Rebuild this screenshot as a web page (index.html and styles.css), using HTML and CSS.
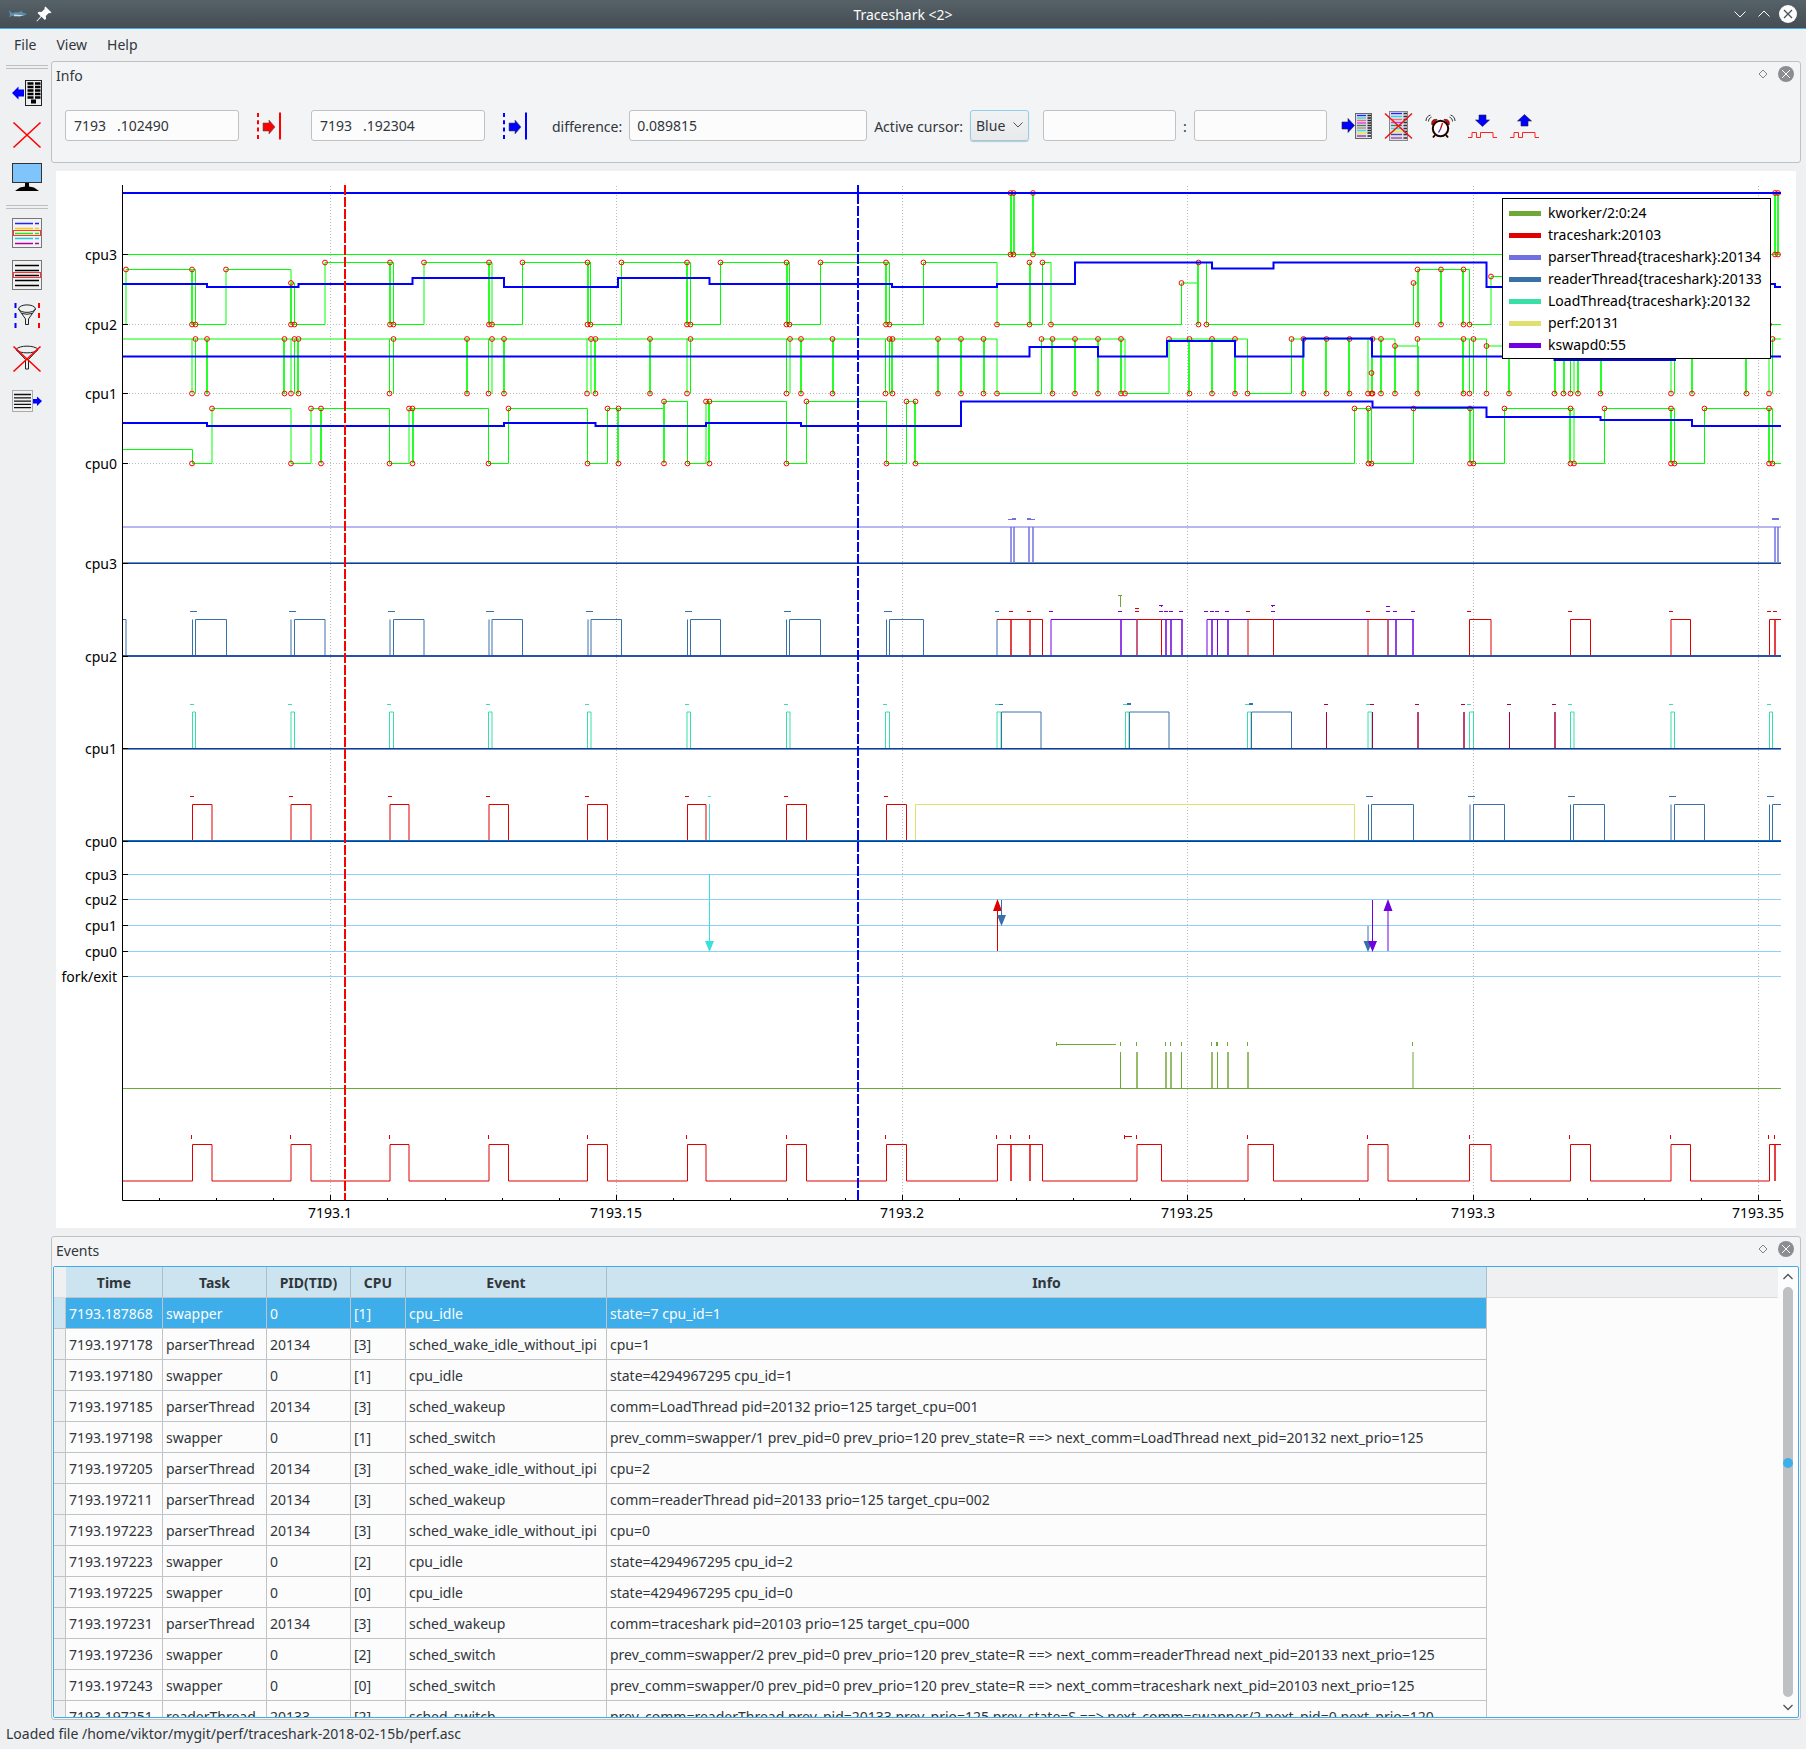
FILE: index.html
```html
<!DOCTYPE html>
<html lang="en">
<head>
<meta charset="utf-8">
<title>Traceshark &lt;2&gt;</title>
<link rel="stylesheet" href="styles.css">
</head>
<body>
<header class="titlebar">
  <div class="titlebar-side">
    <svg width="18" height="18" viewBox="0 0 18 18"><path d="M0 5l3 3c3-.8 5-.8 8-.8l1-2 1.500 2.300 4.500 1.500-3 1.500-3 .3-2 1.200-1-1.200-6 .2-3 1 1-2z" fill="#5b8fae"/><path d="M5 9.500l10 .8-4 1H5z" fill="#d5dde2"/></svg>
    <svg width="18" height="18" viewBox="0 0 18 18"><path d="M10.500 1.500l6 6-1.500.8-1.200-.3-3 3 .3 2.700-1.300 1.300-3.300-3.200L2 16.500l-.5-.5 4.200-4.700L2.500 8l1.300-1.300 2.700.3 3.200-3-.3-1.200z" fill="#fcfcfc"/></svg>
  </div>
  <h1 class="titlebar-text">Traceshark &lt;2&gt;</h1>
  <div class="titlebar-side titlebar-buttons">
    <button class="win-btn" aria-label="Minimize"><svg width="18" height="18" viewBox="0 0 18 18"><path d="M3.500 6.500L9 12l5.500-5.500" fill="none" stroke="#fcfcfc"/></svg></button>
    <button class="win-btn" aria-label="Maximize"><svg width="18" height="18" viewBox="0 0 18 18"><path d="M3.500 11.500L9 6l5.500 5.500" fill="none" stroke="#fcfcfc"/></svg></button>
    <button class="win-btn" aria-label="Close"><svg width="18" height="18" viewBox="0 0 18 18"><circle cx="9" cy="9" r="9" fill="#fcfcfc"/><path d="M5 5l8 8M13 5l-8 8" stroke="#475057" stroke-width="1.200"/></svg></button>
  </div>
</header>

<nav class="menubar">
  <button class="menu-item">File</button>
  <button class="menu-item">View</button>
  <button class="menu-item">Help</button>
</nav>

<div class="workspace">
  <aside class="toolbar">
    <div class="grip"></div>
    <div class="toolbar-group">
      <button class="icon-btn" aria-label="Open file"><svg class="icon" viewBox="0 0 32 32"><rect x="14.500" y="3.500" width="16" height="25" fill="#eee" stroke="#222"/><path d="M16.500 6.500h6M24 6.500h5.500M16.500 10h6M24 10h5.500M16.500 13.500h6M24 13.500h5.500M16.500 17h6M24 17h5.500M16.500 20.500h6M24 20.500h5.500" stroke="#000" stroke-width="2.600"/><path d="M20 22.500h5v4h-5z"/><path d="M1 16l6.500-6.500v3H13v7H7.500v3z" fill="#00f"/></svg></button>
      <button class="icon-btn" aria-label="Close file"><svg class="icon" viewBox="0 0 32 32"><path d="M2.500 3.500l27 25M29.500 3.500l-27 25" stroke="#f00" stroke-width="1.600"/></svg></button>
      <button class="icon-btn" aria-label="Full screen"><svg class="icon" viewBox="0 0 32 32"><rect x="1.500" y="2.500" width="29" height="19" fill="#80c4fc" stroke="#333"/><path d="M14 22h4v3.500l5 1 5 3.500H4l5-3.500 5-1z"/></svg></button>
    </div>
    <div class="grip"></div>
    <div class="toolbar-group">
      <button class="icon-btn" aria-label="Choose task"><svg class="icon" viewBox="0 0 32 32"><rect x="1.500" y="1.500" width="29" height="29" fill="#f2f2f2" stroke="#777"/><g stroke-width="1.600"><path d="M4 6.500h18M24 6.500h4" stroke="#22f"/><path d="M4 11.500h18M24 11.500h4" stroke="#fc0"/><path d="M4 16.500h18M24 16.500h4" stroke="#1e1"/><path d="M4 21.500h18M24 21.500h4" stroke="#2cd"/><path d="M4 26.500h18M24 26.500h4" stroke="#a0a"/></g><rect x="2.500" y="13.500" width="27" height="5" fill="none" stroke="#f33"/></svg></button>
      <button class="icon-btn" aria-label="Choose event"><svg class="icon" viewBox="0 0 32 32"><rect x="1.500" y="1.500" width="29" height="29" fill="#f2f2f2" stroke="#777"/><path d="M4 6.500h24M4 11.500h24M4 16.500h24M4 21.500h24M4 26.500h24" stroke="#000" stroke-width="1.600"/><rect x="2.500" y="13.500" width="27" height="5" fill="none" stroke="#f33"/></svg></button>
      <button class="icon-btn" aria-label="Filter on time"><svg class="icon" viewBox="0 0 32 32"><path d="M4.500 2v25" stroke="#00f" stroke-width="2" stroke-dasharray="5 5"/><path d="M28 2v25" stroke="#f00" stroke-width="2" stroke-dasharray="5 5"/><path d="M7.500 8C8 2.500 24 2.500 24.500 8l-7 10v5.500h-3V18zM7.500 8c2 4.500 15 4.500 17 0M11 12.500q5 1.500 10 0" fill="none" stroke="#222"/></svg></button>
      <button class="icon-btn" aria-label="Reset filters"><svg class="icon" viewBox="0 0 32 32"><path d="M5 6.500C8 2 24 2 27 6.500l-9.500 10V26h-3v-9.500zM5 6.500c3 4.500 19 4.500 22 0" fill="none" stroke="#222"/><path d="M2.500 3.500l27 25M29.500 3.500l-27 25" stroke="#f00" stroke-width="1.600"/></svg></button>
      <button class="icon-btn" aria-label="Export events"><svg class="icon" viewBox="0 0 32 32"><rect x="1.500" y="5.500" width="20" height="21" fill="#f2f2f2" stroke="#aaa"/><path d="M3 9.500h17M3 12.800h17M3 16.100h17M3 19.400h17M3 22.700h17" stroke="#111" stroke-width="1.300"/><path d="M31 16l-5-4.500V14h-4v4.500h4V21z" fill="#00f"/></svg></button>
    </div>
  </aside>

  <main class="docks">
    <section class="dock">
      <div class="dock-head">
        <h2 class="dock-title">Info</h2>
        <button class="dock-btn" aria-label="Float"><svg width="16" height="16" viewBox="0 0 16 16"><path d="M8 4l4 4-4 4-4-4z" fill="none" stroke="#7f8489"/></svg></button>
        <button class="dock-btn" aria-label="Close"><svg width="16" height="16" viewBox="0 0 16 16"><circle cx="8" cy="8" r="8" fill="#8b8e91"/><path d="M4 4l8 8M12 4l-8 8" stroke="#fcfcfc"/></svg></button>
      </div>
      <div class="info-row">
        <div class="cursor-group">
          <input class="field field-time" type="text" value="7193   .102490" aria-label="Red cursor time">
          <button class="icon-btn" aria-label="Move red cursor"><svg class="icon" viewBox="0 0 32 32"><path d="M5 3v26" stroke="#f00" stroke-width="2" stroke-dasharray="4 3.300"/><path d="M27 2.500v27" stroke="#f00" stroke-width="2"/><path d="M10 13h6v-3l6 7-6 7v-3h-6z" fill="#f00" stroke="#555" stroke-width=".6"/></svg></button>
        </div>
        <div class="cursor-group">
          <input class="field field-time" type="text" value="7193   .192304" aria-label="Blue cursor time">
          <button class="icon-btn" aria-label="Move blue cursor"><svg class="icon" viewBox="0 0 32 32"><path d="M5 3v26" stroke="#00f" stroke-width="2" stroke-dasharray="4 3.300"/><path d="M27 2.500v27" stroke="#00f" stroke-width="2"/><path d="M10 13h6v-3l6 7-6 7v-3h-6z" fill="#00f" stroke="#555" stroke-width=".6"/></svg></button>
        </div>
        <div class="labelled">
          <label for="difference">difference:</label>
          <input id="difference" class="field field-difference" type="text" value="0.089815">
          <label for="active-cursor">Active cursor:</label>
          <span class="combo">
            <select id="active-cursor"><option>Blue</option><option>Red</option></select>
            <svg class="combo-arrow" width="12" height="12" viewBox="0 0 12 12"><path d="M1.500 3.500L6 8l4.500-4.500" fill="none" stroke="#4d5257"/></svg>
          </span>
        </div>
        <div class="search-group">
          <input class="field field-search" type="text" aria-label="PID">
          <span>:</span>
          <input class="field field-search" type="text" aria-label="Task name">
        </div>
        <div class="action-group">
          <button class="icon-btn" aria-label="Show in event list"><svg class="icon" viewBox="0 0 32 32"><path d="M2 12h6V8.500l6.500 7-6.500 7V19H2z" fill="#00f" stroke="#223" stroke-width=".6"/><rect x="15.500" y="3.500" width="16" height="25" fill="#dde" stroke="#666"/><g stroke-width="1.300"><path d="M17 5.500h9" stroke="#22f"/><path d="M17 8h9" stroke="#2dd"/><path d="M17 10.500h9" stroke="#f66"/><path d="M17 13h9" stroke="#d3d"/><path d="M17 15.500h9" stroke="#384"/><path d="M17 18h9" stroke="#b86"/><path d="M17 20.500h9" stroke="#3dd"/><path d="M17 23h9" stroke="#ee2"/><path d="M17 26h9" stroke="#838"/><path d="M27.500 5.500H31M27.500 8H31M27.500 10.500H31M27.500 13H31M27.500 15.500H31M27.500 18H31M27.500 20.500H31M27.500 23H31M27.500 26H31" stroke="#222"/></g></svg></button>
          <button class="icon-btn" aria-label="Remove from event list"><svg class="icon" viewBox="0 0 32 32"><rect x="7.500" y="1.500" width="18" height="29" fill="#dde" stroke="#888"/><g stroke-width="1.300"><path d="M9 3.500h11" stroke="#22f"/><path d="M9 6.500h11" stroke="#2dd"/><path d="M9 9.500h11" stroke="#f66"/><path d="M9 12.500h11" stroke="#d3d"/><path d="M9 15.500h11" stroke="#384"/><path d="M9 18.500h11" stroke="#3dd"/><path d="M9 21.500h11" stroke="#ee2"/><path d="M9 24.500h11" stroke="#44a"/><path d="M9 28h11" stroke="#949"/><path d="M21.500 3.500H25M21.500 6.500H25M21.500 9.500H25M21.500 12.500H25M21.500 15.500H25M21.500 18.500H25M21.500 21.500H25M21.500 24.500H25M21.500 28H25" stroke="#333"/></g><path d="M3 3.500l27 25M30 3.500l-27 25" stroke="#e11" stroke-width="1.500"/></svg></button>
          <button class="icon-btn" aria-label="Alarm"><svg class="icon" viewBox="0 0 32 32"><path d="M8 15c-1-4 1-6 5-5.500zM25 15c1-4-1-6-5-5.500z" fill="#e00" stroke="#300" stroke-width=".7"/><path d="M11 25l-2 2.500M22 25l2 2.500" stroke="#200" stroke-width="2"/><circle cx="16.500" cy="18.500" r="7.700" fill="#fff" stroke="#200" stroke-width="2"/><path d="M16.500 19l2-6" stroke="#d00" stroke-width="1.300"/><path d="M16.500 19l-2 3.500" stroke="#33c" stroke-width="1.300"/><path d="M2 11c0-3 1.500-5 4.500-6M4.500 11.500c0-2 1-3.500 3-4.500M31 11c0-3-1.500-5-4.500-6M28.500 11.500c0-2-1-3.500-3-4.500" fill="none" stroke="#333"/></svg></button>
          <button class="icon-btn" aria-label="Next event"><svg class="icon" viewBox="0 0 32 32"><path d="M13 5h7v5h3.500l-7 6.500-7-6.500H13z" fill="#00f" stroke="#223" stroke-width=".6"/><path d="M2 27.500h4v-5h4.500v5h4v-5H27v5h4" fill="none" stroke="#f22"/></svg></button>
          <button class="icon-btn" aria-label="Previous event"><svg class="icon" viewBox="0 0 32 32"><path d="M13 16h7v-5h3.500l-7-6.500-7 6.500H13z" fill="#00f" stroke="#223" stroke-width=".6"/><path d="M2 27.500h4v-5h4.500v5h4v-5H27v5h4" fill="none" stroke="#f22"/></svg></button>
        </div>
      </div>
    </section>

    <section class="plot">
      <svg class="plot-canvas" viewBox="56 171 1740 1057" role="img" aria-label="CPU scheduling trace">
        <defs>
          <marker id="dot" markerWidth="7" markerHeight="7" refX="3.500" refY="3.500" markerUnits="userSpaceOnUse"><circle cx="3.500" cy="3.500" r="2.400" fill="none" stroke="#f00"/></marker>
        </defs>
        <!-- grid -->
        <path class="grid" d="M330.500 186V1200M616.500 186V1200M902.500 186V1200M1187.500 186V1200M1473.500 186V1200M1758.500 186V1200M123 324.500H1781M123 393.500H1781M123 463.500H1781"/>

        <!-- idle states -->
        <g class="idle">
          <path d="M123 254.500H1781"/>
          <path d="M126 324.500V269.500H192.500V324.500H195.500V269.500H192.500M195.500 324.500H226V269.500H291V324.500H294.500V283H291M294.500 324.500H325V262.500H390V324.500M390 262.500H393.500V324.500H424V262.500H489V324.500M489 262.500H492V324.500H522.500V262.500H587.500V324.500M587.500 262.500H590.500V324.500H621.500V262.500H687V324.500M687 262.500H690.500V324.500H720.500V262.500H786.500V324.500M786.500 262.500H789.500V324.500H820.500V262.500H886V324.500M886 262.500H889.500V324.500H923.500V262.500H997V324.500H1042.500V262.500H1051V324.500H1181.500V283H1198.500M1198.500 262.500H1206.500V324.500H1413.500V283H1417.500M1417.500 324.500V269.500H1469.500V324.500H1491V276.500H1520M1765 324.500H1781"/>
          <path d="M123 339H997V393.500H1041.500V339H1125V393.500H1169V339H1247.500V393.500H1291.500V339H1395V346H1417.500V339H1486.500V346H1520M192 339V393.500M195.500 339V393.500M291 339V393.500M294.500 339V393.500M389.500 339V393.500M393.500 339V393.500M488.500 339V393.500M492 339V393.500M587 339V393.500M591 339V393.500M687 339V393.500M690.500 339V393.500M786.500 339V393.500M790 339V393.500M885.500 339V393.500M889.500 339V393.500M1368 339V393.500M1469.500 339V393.500M1473.500 339V393.500M1486.500 346V393.500M1570.500 346V393.500M1574 346V393.500M1671 346V393.500M1674.500 346V393.500M1769 346V393.500M1781 339H1772.500V393.500"/>
          <path d="M123 449.500H192.500V463.500H212V408.500H291V463.500H311V408.500H389.500V463.500H409V408.500H488.500V463.500H508.500V408.500H587.500V463.500H607.500V408.500H664M664 401.500H687.500V463.500H706V401.500H786.500V463.500H806.500V401.500H886.500V463.500H906.500V401.500H915.500V463.500H1354.500V408.500H1371.500V463.500H1413.500V408.500H1473.500V463.500H1504.500V408.500H1574V463.500H1604.500V408.500H1674.500V463.500H1704.500V408.500H1772.500V463.500H1781"/>
        </g>
        <g class="spikes">
          <path d="M1011 193V254M1014 193V254M1033 193V254M1775 193V254M1778 193V254"/>
          <path d="M192 269V325M291 283V325M390 262V325M489 262V325M588 262V325M687 262V325M787 262V325M886 262V325M1030 262V325M1198 262V325M1418 269V325M1441 269V325M1463 269V325"/>
          <path d="M207 339V394M284 339V394M298 339V394M467 339V394M504 339V394M595 339V394M650 339V394M801 339V394M833 339V394M892 339V394M938 339V394M961 339V394M984 339V394M1052 339V394M1075 339V394M1098 339V394M1121 339V394M1189 339V394M1212 339V394M1235 339V394M1303 339V394M1326 339V394M1349 339V394M1372 339V394M1381 339V394M1395 346V394M1418 346V394M1463 339V394M1509 346V394M1555 346V394M1564 346V394M1578 346V394M1601 346V394M1692 346V394M1746 346V394"/>
          <path d="M321 408V463M413 408V463M618 408V463M664 401V463M709 401V463M915 401V463M1368 408V463M1470 408V463M1570 408V463M1671 408V463M1769 408V463"/>
        </g>
        <polyline class="dots" points="1010.500,193 1013.500,193 1033,193 1775,193 1778,193 1010.500,254.500 1013.500,254.500 1033,254.500 1775,254.500 1778,254.500"/>
        <polyline class="dots" points="126,269.500 192,269.500 192,324.500 195.500,324.500 226,269.500 291,283 291,324.500 294.500,324.500 325,262.500 390,262.500 390,324.500 393.500,324.500 424,262.500 489,262.500 489,324.500 492,324.500 522.500,262.500 587.500,262.500 587.500,324.500 590.500,324.500 621.500,262.500 687,262.500 687,324.500 690.500,324.500 720.500,262.500 786.500,262.500 786.500,324.500 789.500,324.500 820.500,262.500 886,262.500 886,324.500 889.500,324.500 923.500,262.500 997,324.500 1029.500,262.500 1029.500,324.500 1042.500,262.500 1051,324.500 1181.500,283 1198.500,262.500 1198.500,324.500 1206.500,324.500 1413.500,283 1417.500,269.500 1417.500,324.500 1441,269.500 1441,324.500 1463.500,269.500 1463.500,324.500 1469.500,324.500 1491,276.500 1769,324.500"/>
        <polyline class="dots" points="192,393.500 195.500,339 207,339 207,393.500 284.500,339 284.500,393.500 291,393.500 294.500,339 298.500,339 298.500,393.500 389.500,393.500 393.500,339 467,339 467,393.500 488.500,393.500 492,339 504,339 504,393.500 587,393.500 591,339 595.500,339 595.500,393.500 650,339 650,393.500 687,393.500 690.500,339 786.500,393.500 790,339 801,339 801,393.500 832.500,339 832.500,393.500 885.500,393.500 889.500,339 892.500,339 892.500,393.500 938,339 938,393.500 961,339 961,393.500 983.500,339 983.500,393.500 997,393.500 1041.500,339 1052.500,339 1052.500,393.500 1075,339 1075,393.500 1098,339 1098,393.500 1121,339 1121,393.500 1125,393.500 1169,339 1189.500,339 1189.500,393.500 1212,339 1212,393.500 1235,339 1235,393.500 1247.500,393.500 1291.500,339 1303.500,339 1303.500,393.500 1326.500,339 1326.500,393.500 1349.500,339 1349.500,393.500 1368,393.500 1371.500,373 1371.500,393.500 1372.500,393.500 1372.500,339 1381,339 1381,393.500 1395,346 1395,393.500 1417.500,393.500 1417.500,339 1463.500,339 1463.500,393.500 1469.500,393.500 1473.500,339 1486.500,346 1486.500,393.500 1509,393.500 1554.500,393.500 1563.500,393.500 1570.500,393.500 1578,393.500 1600.500,393.500 1671,393.500 1692,393.500 1746.500,393.500 1769,393.500 1772.500,339"/>
        <polyline class="dots" points="192,463.500 212,408.500 291,463.500 311,408.500 321,408.500 321,463.500 389.500,463.500 409,408.500 412.500,408.500 412.500,463.500 488.500,463.500 508.500,408.500 587.500,463.500 607.500,408.500 618.500,408.500 618.500,463.500 664,401.500 664,463.500 687.500,463.500 706,401.500 709.500,401.500 709.500,463.500 786.500,463.500 806.500,401.500 886.500,463.500 906.500,401.500 915.500,401.500 915.500,463.500 1354.500,408.500 1368.500,408.500 1368.500,463.500 1371.500,463.500 1413.500,408.500 1470,408.500 1470,463.500 1473.500,463.500 1504.500,408.500 1570.500,408.500 1570.500,463.500 1574,463.500 1604.500,408.500 1671,408.500 1671,463.500 1674.500,463.500 1704.500,408.500 1769,408.500 1769,463.500 1772.500,463.500"/>

        <!-- frequencies -->
        <g class="freq">
          <path d="M123 193H1781"/>
          <path d="M123 284H207V287H298.500V284H412.500V278H504V287H618V278H709.500V284H892V287H997V284H1075V262.500H1212V268.500H1273.500V262.500H1486.500V287H1600V284H1775V287H1781"/>
          <path d="M123 356.500H1029.500V347H1098V356.500H1167V341H1235V356.500H1303.500V338.500H1372V356.500H1554.500V360H1675V356.500H1781"/>
          <path d="M123 423H207V426H504V423H595.500V426H706V423H801V426H961V401.500H1372.500V407.500H1486.500V417H1600.500V420H1692V426H1781"/>
        </g>

        <!-- scheduling, cpu3 -->
        <path class="parser" d="M123 527H1781M1008 519.500H1016M1012 518.500H1016M1027 519.500H1035M1027 518.500H1031M1772 519.500H1779M1772 518.500H1779"/>
        <path class="parser wide" d="M1011 527V563M1014 527V563M1029 527V563M1033 527V563M1775 527V563M1778 527V563"/>
        <path class="base-shade" d="M123 562.500H1781"/><path class="base-blue" d="M123 563.500H1781"/>

        <!-- scheduling, cpu2 -->
        <path class="reader" d="M123 619.500H126V656M192.500 619.500V656M195.500 656V619.500H226.500V656M291 619.500V656M294.500 656V619.500H325V656M390 619.500V656M393.500 656V619.500H424V656M489 619.500V656M492 656V619.500H522.500V656M588 619.500V656M591 656V619.500H621.500V656M687.500 619.500V656M690.500 656V619.500H720.500V656M786.500 619.500V656M789.500 656V619.500H820.500V656M886.500 619.500V656M889.500 656V619.500H923.500V656M997 619.500V656M190 611.500H197M289 611.500H296M388 611.500H395M486 611.500H494M586 611.500H593M685 611.500H692M784 611.500H791M884 611.500H892M995 611.500H999"/>
        <path class="kswapd" d="M1051 656V619.500H1137M1161.500 619.500H1182M1207 656V619.500H1248M1273.500 619.500H1368M1388 619.500H1413.500M1217.500 619.500V656M1049 611.500H1053M1118 611.500H1122M1159 611.500H1163M1159 605.500H1163M1161.500 605V607M1164 611.500H1168M1169 611.500H1173M1179 611.500H1183M1204 611.500H1208M1210 611.500H1214M1215 611.500H1219M1225 611.500H1229M1271 611.500H1275M1271 605.500H1275M1272.500 605V607M1386 611.500H1390M1386 606.500H1390M1393 611.500H1397M1411 611.500H1415"/>
        <path class="kswapd wide" d="M1121 619V656M1166 619V656M1171 619V656M1182 619V656M1212 619V656M1228 619V656M1396 619V656M1413 619V656"/>
        <path class="shark" d="M997 619.500H1042.500V656M1137 619.500H1161.500V656M1248 656V619.500H1273.500V656M1368 656V619.500H1388M1469.500 656V619.500H1491V656M1570.500 656V619.500H1590.500V656M1671 656V619.500H1690.500V656M1769.500 656V619.500H1781M1009 611.500H1013M1027 611.500H1031M1135 611.500H1139M1135 608.500H1139M1246 611.500H1250M1366 611.500H1370M1467 611.500H1471M1568 611.500H1572M1669 611.500H1673M1767 611.500H1771M1773 611.500H1777"/>
        <path class="shark wide" d="M1011 619V656M1030 619V656M1775 619V656"/>
        <path class="mixed wide" d="M1137 619V656M1388 619V656"/>
        <path class="kworker" d="M1118 595.500H1122M1120.500 595V607"/>
        <path class="base-cpu2 wide" d="M123 656H1781"/>

        <!-- scheduling, cpu1 -->
        <path class="loader" d="M192.500 749V712H195.500V749M291 749V712H294.500V749M389.500 749V712H393.500V749M488.500 749V712H492V749M587.500 749V712H591V749M687 749V712H690.500V749M786.500 749V712H790V749M885.500 749V712H889.500V749M997 749V712H1001V749M1125.500 749V712H1129V749M1247.500 749V712H1251V749M1368 749V712H1372V749M1469.500 749V712H1473.500V749M1570.500 749V712H1574V749M1671 749V712H1674.500V749M1769.500 749V712H1772.500V749M190 704.500H194M288 704.500H292M387 704.500H391M486 704.500H490M585 704.500H589M685 704.500H689M784 704.500H788M883 704.500H887M995 704.500H999M1123 704.500H1127M1245 704.500H1249M1366 704.500H1370M1467 704.500H1471M1568 704.500H1572M1669 704.500H1673M1767 704.500H1771"/>
        <path class="reader" d="M1001.500 749V712H1041V749M1129.500 749V712H1169V749M1251.500 749V712H1291.500V749M999 704.500H1003M1127 704.500H1131M1127 703.500H1131M1249 704.500H1253M1249 703.500H1253"/>
        <path class="maroon" d="M1326.500 712V749M1372.500 712V749M1509.500 712V749M1324 704.500H1328M1370 704.500H1374M1415 704.500H1419M1461 704.500H1465M1507 704.500H1511M1552 704.500H1556"/>
        <path class="maroon wide" d="M1418 712V749M1464 712V749M1555 712V749"/>
        <path class="base-blue" d="M123 748.500H1781"/><path class="base-shade" d="M123 749.500H1781"/>

        <!-- scheduling, cpu0 -->
        <path class="shark" d="M192.500 841V804.500H212V841M291 841V804.500H311V841M390 841V804.500H409V841M489 841V804.500H508.500V841M587.500 841V804.500H607.500V841M687.500 841V804.500H706V841M786.500 841V804.500H806.500V841M886.500 841V804.500H906.500V841M190 796.500H194M289 796.500H293M388 796.500H392M486 796.500H490M585 796.500H589M685 796.500H689M784 796.500H788M884 796.500H888"/>
        <path class="cyan" d="M709.500 804V841M708 796.500H711"/>
        <path class="perf" d="M915.500 841V804.500H1354.500V841"/>
        <path class="reader" d="M1368.500 804.500V841M1371.500 841V804.500H1413.500V841M1470 804.500V841M1473.500 841V804.500H1504.500V841M1570.500 804.500V841M1573.500 841V804.500H1604.500V841M1671 804.500V841M1674.500 841V804.500H1704.500V841M1769.500 804.500V841M1772.500 841V804.500H1781M1366 796.500H1373M1468 796.500H1475M1568 796.500H1575M1669 796.500H1676M1767 796.500H1774"/>
        <path class="base-teal" d="M123 840.500H1781"/><path class="base-blue" d="M123 841.500H1781"/>

        <!-- migrations -->
        <path class="lane" d="M123 874.500H1781M123 899.500H1781M123 925.500H1781M123 951.500H1781M123 976.500H1781"/>
        <path class="cyan" d="M709.500 874V942"/><path fill="#38e0e0" d="M705 941h9l-4.500 11z"/>
        <path class="shark" d="M997.500 951V908"/><path fill="#e00000" d="M993 911h9l-4.500-12z"/>
        <path class="reader" d="M1001.500 900V916M1368 926V942"/><path fill="#3870a8" d="M997 915h9l-4.500 11zM1363.500 941h9l-4.500 11z"/>
        <path class="kswapd" d="M1372.500 900V942M1388 951V908"/><path fill="#7000e0" d="M1368 941h9l-4.500 11zM1383.500 911h9l-4.500-12z"/>

        <!-- single tasks -->
        <path class="kworker" d="M123 1088.500H1781M1120.500 1052V1088M1181.500 1052V1088M1217.500 1052V1088M1413 1052V1088M1056.500 1042V1046M1057 1044.500H1116M1120.500 1042V1046M1136.500 1042V1046M1165.500 1042V1046M1170.500 1042V1046M1181.500 1042V1046M1211.500 1042V1046M1216.500 1042V1046M1217.500 1042V1046M1227.500 1042V1046M1247.500 1042V1046M1412.500 1042V1046"/>
        <path class="kworker wide" d="M1137 1052V1088M1166 1052V1088M1171 1052V1088M1212 1052V1088M1228 1052V1088M1248 1052V1088"/>
        <path class="shark" d="M123 1181H192.500V1144.500H212V1181H291V1144.500H311V1181H390V1144.500H409V1181H489V1144.500H508.500V1181H587.500V1144.500H607.500V1181H687.500V1144.500H706V1181H786.500V1144.500H806.500V1181H886.500V1144.500H906.500V1181H997.500V1144.500H1042.500V1181H1137V1144.500H1161.500V1181H1248V1144.500H1273.500V1181H1368V1144.500H1388V1181H1469.500V1144.500H1491V1181H1570.500V1144.500H1590.500V1181H1671V1144.500H1690.500V1181H1769.500V1144.500H1781M191.500 1135V1139M290.500 1135V1139M389.500 1135V1139M488.500 1135V1139M587.500 1135V1139M686.500 1135V1139M786.500 1135V1139M885.500 1135V1139M996.500 1135V1139M1010.500 1135V1139M1029.500 1135V1139M1124.500 1135V1139M1125 1136.500H1132M1136.500 1135V1139M1247.500 1135V1139M1367.500 1135V1139M1469.500 1135V1139M1569.500 1135V1139M1670.500 1135V1139M1768.500 1135V1139M1774.500 1135V1139"/>
        <path class="shark wide" d="M1011 1144V1181M1030 1144V1181M1775 1144V1181"/>

        <!-- axes -->
        <path class="axis" d="M122.500 185V1200.500H1781M123 254.500h5M123 324.500h5M123 393.500h5M123 463.500h5M123 563.500h5M123 656.500h5M123 748.500h5M123 841.500h5M123 874.500h5M123 899.500h5M123 925.500h5M123 951.500h5M123 976.500h5M330.500 1200v-5M616.500 1200v-5M902.500 1200v-5M1187.500 1200v-5M1473.500 1200v-5M1758.500 1200v-5M159.500 1200v-2M216.500 1200v-2M273.500 1200v-2M387.500 1200v-2M445.500 1200v-2M502.500 1200v-2M559.500 1200v-2M673.500 1200v-2M730.500 1200v-2M787.500 1200v-2M845.500 1200v-2M959.500 1200v-2M1016.500 1200v-2M1073.500 1200v-2M1130.500 1200v-2M1244.500 1200v-2M1301.500 1200v-2M1359.500 1200v-2M1416.500 1200v-2M1530.500 1200v-2M1587.500 1200v-2M1644.500 1200v-2M1701.500 1200v-2"/>
        <g class="y-labels">
          <text x="117" y="260">cpu3</text><text x="117" y="330">cpu2</text><text x="117" y="399">cpu1</text><text x="117" y="469">cpu0</text>
          <text x="117" y="569">cpu3</text><text x="117" y="662">cpu2</text><text x="117" y="754">cpu1</text><text x="117" y="847">cpu0</text>
          <text x="117" y="880">cpu3</text><text x="117" y="905">cpu2</text><text x="117" y="931">cpu1</text><text x="117" y="957">cpu0</text>
          <text x="117" y="982">fork/exit</text>
        </g>
        <g class="x-labels">
          <text x="330" y="1218">7193.1</text><text x="616" y="1218">7193.15</text><text x="902" y="1218">7193.2</text><text x="1187" y="1218">7193.25</text><text x="1473" y="1218">7193.3</text><text x="1758" y="1218">7193.35</text>
        </g>
        <path class="cursor-line" stroke="#f00" d="M345 185V1200"/>
        <path class="cursor-line" stroke="#00f" stroke-dashoffset="3" d="M858 185V1200"/>
      </svg>
      <ul class="legend">
        <li><i class="swatch" style="background:#70a838"></i>kworker/2:0:24</li>
        <li><i class="swatch" style="background:#e00000"></i>traceshark:20103</li>
        <li><i class="swatch" style="background:#7070e0"></i>parserThread{traceshark}:20134</li>
        <li><i class="swatch" style="background:#3870a8"></i>readerThread{traceshark}:20133</li>
        <li><i class="swatch" style="background:#38e0a8"></i>LoadThread{traceshark}:20132</li>
        <li><i class="swatch" style="background:#e0e070"></i>perf:20131</li>
        <li><i class="swatch" style="background:#7000e0"></i>kswapd0:55</li>
      </ul>
    </section>

    <section class="dock dock-events">
      <div class="dock-head">
        <h2 class="dock-title">Events</h2>
        <button class="dock-btn" aria-label="Float"><svg width="16" height="16" viewBox="0 0 16 16"><path d="M8 4l4 4-4 4-4-4z" fill="none" stroke="#7f8489"/></svg></button>
        <button class="dock-btn" aria-label="Close"><svg width="16" height="16" viewBox="0 0 16 16"><circle cx="8" cy="8" r="8" fill="#8b8e91"/><path d="M4 4l8 8M12 4l-8 8" stroke="#fcfcfc"/></svg></button>
      </div>
      <div class="events-frame">
        <div class="events-view">
          <table class="events">
            <colgroup><col class="c-mark"><col class="c-time"><col class="c-task"><col class="c-pid"><col class="c-cpu"><col class="c-event"><col class="c-info"><col></colgroup>
            <thead><tr><td class="corner"></td><th>Time</th><th>Task</th><th>PID(TID)</th><th>CPU</th><th>Event</th><th>Info</th><td class="rest"></td></tr></thead>
            <tbody>
              <tr class="selected"><td></td><td>7193.187868</td><td>swapper</td><td>0</td><td>[1]</td><td>cpu_idle</td><td>state=7 cpu_id=1</td></tr>
              <tr><td></td><td>7193.197178</td><td>parserThread</td><td>20134</td><td>[3]</td><td>sched_wake_idle_without_ipi</td><td>cpu=1</td></tr>
              <tr><td></td><td>7193.197180</td><td>swapper</td><td>0</td><td>[1]</td><td>cpu_idle</td><td>state=4294967295 cpu_id=1</td></tr>
              <tr><td></td><td>7193.197185</td><td>parserThread</td><td>20134</td><td>[3]</td><td>sched_wakeup</td><td>comm=LoadThread pid=20132 prio=125 target_cpu=001</td></tr>
              <tr><td></td><td>7193.197198</td><td>swapper</td><td>0</td><td>[1]</td><td>sched_switch</td><td>prev_comm=swapper/1 prev_pid=0 prev_prio=120 prev_state=R ==&gt; next_comm=LoadThread next_pid=20132 next_prio=125</td></tr>
              <tr><td></td><td>7193.197205</td><td>parserThread</td><td>20134</td><td>[3]</td><td>sched_wake_idle_without_ipi</td><td>cpu=2</td></tr>
              <tr><td></td><td>7193.197211</td><td>parserThread</td><td>20134</td><td>[3]</td><td>sched_wakeup</td><td>comm=readerThread pid=20133 prio=125 target_cpu=002</td></tr>
              <tr><td></td><td>7193.197223</td><td>parserThread</td><td>20134</td><td>[3]</td><td>sched_wake_idle_without_ipi</td><td>cpu=0</td></tr>
              <tr><td></td><td>7193.197223</td><td>swapper</td><td>0</td><td>[2]</td><td>cpu_idle</td><td>state=4294967295 cpu_id=2</td></tr>
              <tr><td></td><td>7193.197225</td><td>swapper</td><td>0</td><td>[0]</td><td>cpu_idle</td><td>state=4294967295 cpu_id=0</td></tr>
              <tr><td></td><td>7193.197231</td><td>parserThread</td><td>20134</td><td>[3]</td><td>sched_wakeup</td><td>comm=traceshark pid=20103 prio=125 target_cpu=000</td></tr>
              <tr><td></td><td>7193.197236</td><td>swapper</td><td>0</td><td>[2]</td><td>sched_switch</td><td>prev_comm=swapper/2 prev_pid=0 prev_prio=120 prev_state=R ==&gt; next_comm=readerThread next_pid=20133 next_prio=125</td></tr>
              <tr><td></td><td>7193.197243</td><td>swapper</td><td>0</td><td>[0]</td><td>sched_switch</td><td>prev_comm=swapper/0 prev_pid=0 prev_prio=120 prev_state=R ==&gt; next_comm=traceshark next_pid=20103 next_prio=125</td></tr>
              <tr><td></td><td>7193.197251</td><td>readerThread</td><td>20133</td><td>[2]</td><td>sched_switch</td><td>prev_comm=readerThread prev_pid=20133 prev_prio=125 prev_state=S ==&gt; next_comm=swapper/2 next_pid=0 next_prio=120</td></tr>
            </tbody>
          </table>
        </div>
        <div class="scrollbar">
          <button class="scroll-btn" aria-label="Scroll up"><svg width="12" height="12" viewBox="0 0 12 12"><path d="M1.500 8L6 3.500 10.500 8" fill="none" stroke="#4d5257" stroke-width="1.300"/></svg></button>
          <div class="scroll-track"><div class="scroll-thumb"></div></div>
          <button class="scroll-btn" aria-label="Scroll down"><svg width="12" height="12" viewBox="0 0 12 12"><path d="M1.500 4L6 8.500 10.500 4" fill="none" stroke="#4d5257" stroke-width="1.300"/></svg></button>
        </div>
      </div>
    </section>
  </main>
</div>
<footer class="statusbar">Loaded file /home/viktor/mygit/perf/traceshark-2018-02-15b/perf.asc</footer>
</body>
</html>
```
FILE: styles.css
```css
* { box-sizing: border-box; }

body {
  margin: 0;
  height: 100vh;
  display: flex;
  flex-direction: column;
  background: #eff0f2;
  color: #31363b;
  font: 14px/20px "Noto Sans", sans-serif;
}

button, input, select { font: inherit; color: inherit; }
button { border: 0; padding: 0; background: none; }
svg { display: block; }

/* window title */
.titlebar {
  display: flex;
  align-items: center;
  height: 29px;
  padding: 0 9px;
  background: linear-gradient(#566168, #454d54);
  border-bottom: 1px solid #3daee9;
  color: #fcfcfc;
}
.titlebar-side { flex: 1; display: flex; gap: 8px; }
.titlebar-buttons { justify-content: flex-end; gap: 6px; }
.titlebar-text { margin: 0; padding-top: 2px; font-size: 14px; font-weight: 400; }

/* menus */
.menubar { display: flex; gap: 20px; height: 32px; padding: 0 14px; }

/* main area */
.workspace { flex: 1; min-height: 0; display: grid; grid-template-columns: 51px 1fr; padding-right: 5px; }
.toolbar { padding: 4px 3px 0 6px; }
.grip { height: 4px; border-top: 1px solid #bcbec0; border-bottom: 1px solid #bcbec0; }
.toolbar-group { display: flex; flex-direction: column; gap: 10px; padding: 8px 0 12px 5px; }
.icon-btn, .icon { width: 32px; height: 32px; }
.icon-btn { flex: none; }

.docks { display: flex; flex-direction: column; gap: 8px; min-width: 0; min-height: 0; }
.dock { border: 1px solid #bfc1c3; border-radius: 3px; background: #f3f4f6; }
.dock-head { display: flex; gap: 7px; height: 29px; padding: 4px 6px 0 4px; }
.dock-title { flex: 1; margin: 0; font-size: 14px; line-height: 20px; font-weight: 400; }
.dock-btn { width: 16px; height: 16px; }

/* info dock */
.info-row { display: flex; align-items: center; height: 71px; padding: 0 13px 2px; }
.info-row label, .search-group span { padding-top: 2px; }
.cursor-group { display: flex; align-items: center; gap: 14px; margin-right: 26px; }
.cursor-group + .cursor-group { margin-right: 21px; }
.labelled { display: flex; align-items: center; gap: 7px; margin-right: 14px; }
.search-group { display: flex; align-items: center; gap: 7px; margin-right: 13px; }
.action-group { display: flex; gap: 10px; }
.field { height: 31px; padding: 0 8px; border: 1px solid #bfc1c3; border-radius: 3px; background: #fcfcfc; }
.field-time { width: 174px; }
.field-difference { width: 238px; padding: 0 7px; }
.field-search { width: 133px; }
.combo { position: relative; }
.combo select {
  display: block;
  width: 59px;
  height: 31px;
  padding: 0 5px;
  appearance: none;
  border: 1px solid #93cee9;
  border-radius: 3px;
  background: linear-gradient(#f1f2f3, #e8e9ea);
  box-shadow: 0 1px 1px rgba(0, 0, 0, .2);
}
.combo-arrow { position: absolute; right: 5px; top: 9px; pointer-events: none; }

/* plot */
.plot { position: relative; margin: 0 5px; background: #fff; }
.plot-canvas { width: 100%; height: auto; fill: none; }
.plot-canvas path { stroke-width: 1; }
.plot-canvas text { fill: #000; font-size: 14px; }
.y-labels { text-anchor: end; }
.x-labels { text-anchor: middle; }
.grid { stroke: #bbb; stroke-dasharray: 1 2; }
.axis { stroke: #000; }
.idle { stroke: #0f0; }
.plot-canvas .spikes path { stroke: #28ff28; stroke-width: 2; }
.plot-canvas .freq path { stroke: #00f; stroke-width: 2; }
.dots { marker-start: url(#dot); marker-mid: url(#dot); marker-end: url(#dot); }
.parser { stroke: #7070e0; }
.reader { stroke: #3870a8; }
.loader { stroke: #38e0a8; }
.kswapd { stroke: #7000e0; }
.kworker { stroke: #70a838; }
.shark { stroke: #e00000; }
.perf { stroke: #e0e070; }
.cyan { stroke: #38e0e0; }
.maroon { stroke: #a80040; }
.mixed { stroke: #b82858; }
.lane { stroke: #90d0f8; }
.base-shade { stroke: #809098; }
.base-blue { stroke: #0040c0; }
.base-teal { stroke: #107098; }
.base-cpu2 { stroke: #2c4fa8; }
.plot-canvas .wide { stroke-width: 2; }
.wide:not(.base-cpu2) { stroke-opacity: .75; }
.plot-canvas .cursor-line { stroke-width: 2; stroke-dasharray: 10 2; }

.legend {
  position: absolute;
  top: 27px;
  right: 25px;
  width: 269px;
  margin: 0;
  padding: 3px 6px 2px;
  list-style: none;
  border: 1px solid #000;
  background: #fff;
  color: #000;
  line-height: 22px;
}
.legend li { display: flex; align-items: center; gap: 7px; }
.swatch { width: 32px; height: 5px; }

/* events dock */
.dock-events { flex: 1; min-height: 0; display: flex; flex-direction: column; padding: 0 1px 1px; }
.dock-events .dock-head { padding: 4px 5px 0 3px; }
.events-frame { flex: 1; min-height: 0; display: flex; border: 1px solid #3daee9; border-radius: 2px; background: #fcfcfc; }
.events-view { flex: 1; min-width: 0; overflow: hidden; }
.events { width: 100%; table-layout: fixed; border-collapse: separate; border-spacing: 0; }
.events td, .events th {
  height: 31px;
  padding: 2px 3px 0;
  border-right: 1px solid #c0c4c7;
  border-bottom: 1px solid #c0c4c7;
  white-space: nowrap;
  text-align: left;
}
.events th { background: #cce4f0; border-right-color: #a9bfcb; text-align: center; }
.events .corner, .events .rest { background: #eff0f1; border-right-color: transparent; border-bottom-color: #d8dadc; }
.events tbody td:first-child { background: #eff0f1; }
.events .selected td { background: #3daee9; color: #fcfcfc; }
.events tbody .selected td:first-child { background: #cce4f0; }
.c-mark { width: 12px; }
.c-time { width: 97px; }
.c-task { width: 104px; }
.c-pid { width: 84px; }
.c-cpu { width: 55px; }
.c-event { width: 201px; }
.c-info { width: 880px; }

.scrollbar { display: flex; flex-direction: column; align-items: center; width: 20px; }
.scroll-btn { display: grid; place-items: center; width: 20px; height: 20px; }
.scroll-track { flex: 1; width: 10px; border-radius: 5px; background: #bfc0c1; display: flex; flex-direction: column; }
.scroll-thumb { width: 10px; height: 10px; margin-top: 171px; border-radius: 5px; background: #3daee9; }

.statusbar { height: 29px; padding: 4px 6px; }
```
